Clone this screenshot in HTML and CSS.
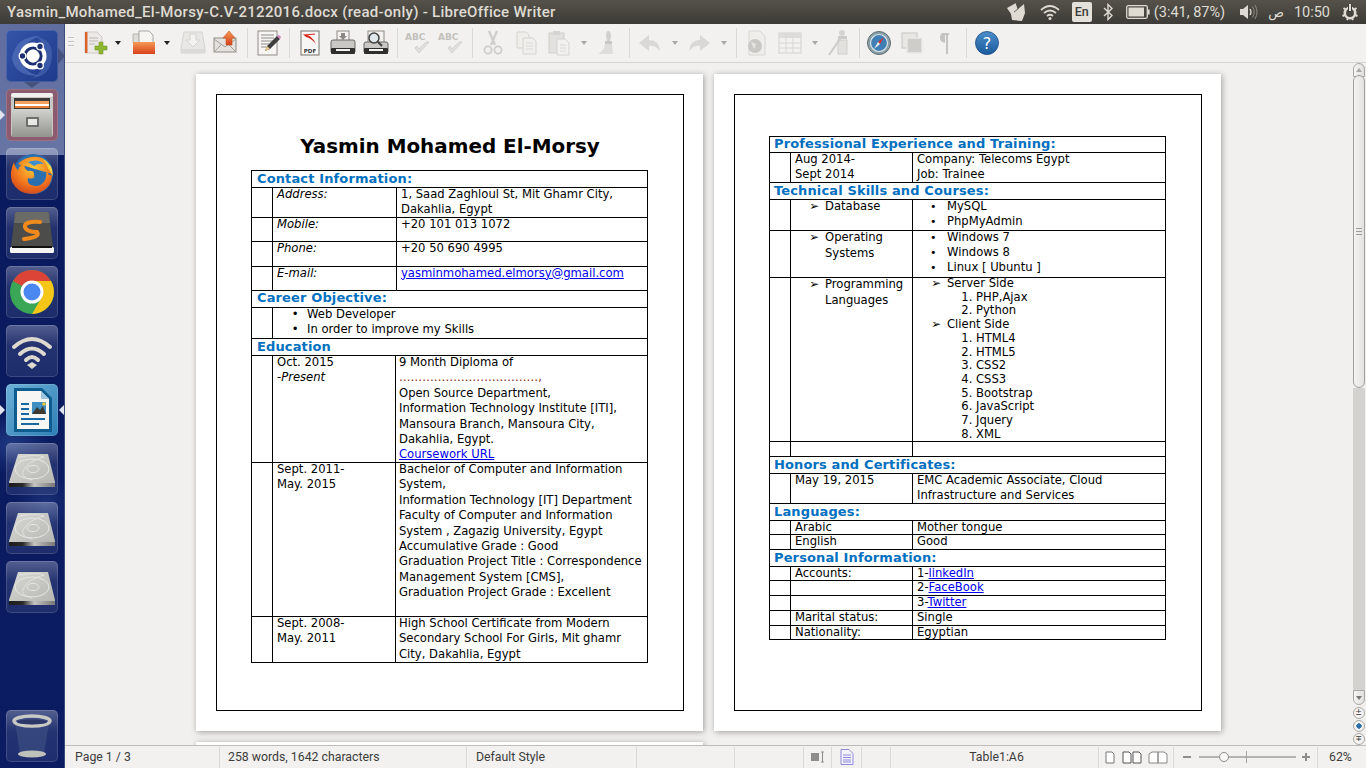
FILE: index.html
```html
<!DOCTYPE html>
<html lang="en">
<head>
<meta charset="utf-8">
<title>LibreOffice Writer</title>
<link rel="stylesheet" href="styles.css">
</head>
<body>
<svg class="defs" width="0" height="0" aria-hidden="true">
  <defs>
    <linearGradient id="gOrange" x1="0" y1="0" x2="0" y2="1"><stop offset="0" stop-color="#f59a55"/><stop offset="1" stop-color="#d8401a"/></linearGradient>
    <linearGradient id="gMetal" x1="0" y1="0" x2="0" y2="1"><stop offset="0" stop-color="#d2d2ce"/><stop offset="1" stop-color="#94948f"/></linearGradient>
    <linearGradient id="gFace" x1="0" y1="0" x2="1" y2="1"><stop offset="0" stop-color="#d8d8d4"/><stop offset="1" stop-color="#b4b4b0"/></linearGradient>
    <linearGradient id="gStrip" x1="0" y1="0" x2="1" y2="0"><stop offset="0" stop-color="#1c1c1c"/><stop offset=".3" stop-color="#2a2a2a"/><stop offset=".55" stop-color="#c4c4c0"/><stop offset="1" stop-color="#777"/></linearGradient>
    <linearGradient id="gHelp" x1="0" y1="0" x2="0" y2="1"><stop offset="0" stop-color="#4d8ecb"/><stop offset="1" stop-color="#1b5a9c"/></linearGradient>
    <radialGradient id="gFox" cx=".55" cy=".3" r=".8"><stop offset="0" stop-color="#ffc93a"/><stop offset=".55" stop-color="#f47a1d"/><stop offset="1" stop-color="#c9391a"/></radialGradient>
    <symbol id="hdd" viewBox="0 0 48 48">
      <path d="M10 9 H40 L47 37 V40 Q47 42 45 42 H3 Q1 42 1 40 V37 Z" fill="url(#gFace)"/>
      <ellipse cx="24" cy="24" rx="17" ry="10" fill="none" stroke="#e6e6e2" stroke-width="1"/>
      <ellipse cx="25" cy="24" rx="6" ry="3.600" fill="none" stroke="#e6e6e2" stroke-width="1"/>
      <path d="M11 12 Q30 9 36 12 Q20 16 15 26 Q12 32 24 35" fill="none" stroke="#e6e6e2" stroke-width=".8"/>
      <rect x="1" y="38" width="46" height="4" fill="url(#gStrip)"/>
    </symbol>
    <symbol id="abc" viewBox="0 0 28 26">
      <text x="1" y="10" class="abc-t">ABC</text>
      <path d="M11 18 L15 23 L25 12 L22 12 L15 19 L13 16 Z" fill="#e2e1de" stroke="#c6c5c1" stroke-width=".7"/>
    </symbol>
  </defs>
</svg>

<header class="topbar">
  <div class="wintitle">Yasmin_Mohamed_El-Morsy-C.V-2122016.docx (read-only) - LibreOffice Writer</div>
  <div class="tray">
    <svg class="t-paper" width="22" height="22" viewBox="0 0 22 22"><path d="M2 7 L11 2 L13 8 L19 3 L20 12 L17 20 L7 19 L6 13 Z" fill="#dfdbd2"/><path d="M11 2 L13 8 L9 11" fill="none" stroke="#4a4742" stroke-width=".8"/></svg>
    <svg class="t-wifi" width="22" height="18" viewBox="0 0 22 18"><path d="M2 7 Q11 -1 20 7 M5 10 Q11 5 17 10 M8 13 Q11 10.500 14 13" fill="none" stroke="#dfdbd2" stroke-width="1.700"/><circle cx="11" cy="15.500" r="1.500" fill="#dfdbd2"/></svg>
    <div class="t-lang">En</div>
    <svg class="t-bt" width="10" height="18" viewBox="0 0 10 18"><path d="M1 5 L9 12.500 L5 16.500 V1.500 L9 5.500 L1 13" fill="none" stroke="#dfdbd2" stroke-width="1.400"/></svg>
    <svg class="t-bat" width="24" height="14" viewBox="0 0 24 14"><rect x=".7" y=".7" width="20.600" height="12.600" rx="1.500" fill="none" stroke="#dfdbd2" stroke-width="1.300"/><rect x="2.500" y="2.500" width="15.500" height="9" fill="#dfdbd2"/><rect x="22" y="4.500" width="1.600" height="5" fill="#dfdbd2"/></svg>
    <span class="t-text t-battxt">(3:41, 87%)</span>
    <svg class="t-vol" width="20" height="18" viewBox="0 0 20 18"><path d="M1 6 H4 L9 2 V16 L4 12 H1 Z" fill="#dfdbd2"/><path d="M11 6 Q13 9 11 12" fill="none" stroke="#dfdbd2" stroke-width="1.300"/><path d="M13.500 3.500 Q17 9 13.500 14.500 M16 2 Q20 9 16 16" fill="none" stroke="#8d8a84" stroke-width="1"/></svg>
    <span class="t-text t-ar" lang="ar">ص</span>
    <span class="t-text t-time">10:50</span>
    <svg class="t-gear" width="18" height="18" viewBox="0 0 18 18"><circle cx="9" cy="10" r="5.200" fill="none" stroke="#dfdbd2" stroke-width="2.600"/><path d="M9 1 V9" stroke="#3f3d38" stroke-width="4"/><path d="M9 1 V8" stroke="#dfdbd2" stroke-width="2"/><path d="M2.500 5 L4.500 6.500 M15.500 5 L13.500 6.500 M1.500 13 L4 12 M16.500 13 L14 12 M6 17 L7 15 M12 17 L11 15" stroke="#dfdbd2" stroke-width="2"/></svg>
  </div>
</header>

<div class="shell">
  <nav class="launcher">
    <div class="tile tile-dash">
      <svg width="48" height="48" viewBox="0 0 48 48"><path d="M4 26 Q8 4 32 4 Q14 10 14 26 Q14 40 32 44 Q6 44 4 26 Z" fill="#5f7cc2" opacity=".55"/><path d="M44 22 Q44 44 24 46 Q38 38 38 24 Q38 12 28 4 Q44 8 44 22 Z" fill="#5f7cc2" opacity=".4"/><circle cx="25" cy="24" r="13.500" fill="#fff"/><circle cx="25" cy="24" r="8" fill="none" stroke="#1c2f72" stroke-width="3.200"/><circle cx="25" cy="24" r="6" fill="none" stroke="#fff" stroke-width="1"/><circle cx="32" cy="14.500" r="3.300" fill="#1c2f72" stroke="#fff" stroke-width="1.300"/><circle cx="32" cy="33.500" r="3.300" fill="#1c2f72" stroke="#fff" stroke-width="1.300"/><circle cx="14.500" cy="24" r="3.300" fill="#1c2f72" stroke="#fff" stroke-width="1.300"/></svg>
      <span class="ptr-right"></span><span class="ptr-down"></span>
    </div>
    <div class="tile tile-files">
      <span class="pip-left"></span>
      <svg width="46" height="46" viewBox="0 0 46 46"><rect x="2" y="1" width="42" height="44" rx="3" fill="#c8c8c4"/><rect x="2" y="1" width="42" height="4" rx="2" fill="#f0f0ee"/><rect x="5" y="6" width="36" height="14" fill="#3a3a38"/><rect x="6" y="9" width="34" height="3" fill="#f3a15c"/><rect x="6" y="12" width="34" height="2" fill="#fff"/><rect x="6" y="14" width="34" height="2" fill="#e77c35"/><rect x="3" y="17" width="40" height="28" fill="url(#gMetal)"/><rect x="17" y="25" width="13" height="10" rx="1" fill="#6e6e6a"/><rect x="19" y="27" width="9" height="6" fill="#e8e8e6"/></svg>
    </div>
    <div class="tile">
      <svg width="48" height="48" viewBox="0 0 48 48"><circle cx="25" cy="24" r="20" fill="#2a6fb0"/><path d="M10 14 Q20 4 34 8 Q44 14 44 24 Q44 38 30 43 Q12 47 4 32 Q1 22 6 12 Q7 18 10 20 Q12 14 18 11 Q14 18 20 21 Q26 20 26 24 Q28 30 20 28 Q18 36 30 36 Q40 32 38 20 Q42 28 44 24 Z" fill="url(#gFox)"/><path d="M34 8 Q45 14 45 26 L40 18 Q38 12 34 8Z" fill="#ffd23c"/><path d="M20 12 Q30 8 36 14 Q30 13 26 16 Z" fill="#3f8fd0"/></svg>
    </div>
    <div class="tile">
      <svg width="48" height="48" viewBox="0 0 48 48"><path d="M7 5 Q7 3 9 3 H39 Q41 3 41 5 L45 38 H3 Z" fill="#4c4c4a"/><path d="M7 5 Q7 3 9 3 H39 Q41 3 41 5 L42 14 H6 Z" fill="#6a6a66"/><rect x="2" y="38" width="44" height="6" rx="1.500" fill="#f4f4f2"/><rect x="4" y="37" width="40" height="2" fill="#111"/><path d="M32 13 Q16 12 17 18 Q18 23 29 23 Q33 28 16 30" fill="none" stroke="#f08a1d" stroke-width="4" stroke-linecap="round"/></svg>
    </div>
    <div class="tile">
      <svg width="48" height="48" viewBox="0 0 48 48"><circle cx="24" cy="24" r="22" fill="#3aa757"/><path d="M24 2 A22 22 0 0 1 43 13 H24 A11 11 0 0 0 14 18 L5 13 A22 22 0 0 1 24 2 Z" fill="#db4437"/><path d="M43 13 A22 22 0 0 1 24 46 L34 29 A11 11 0 0 0 24 13 Z" fill="#f5c518"/><circle cx="24" cy="24" r="10" fill="#4b87f0" stroke="#fff" stroke-width="3"/></svg>
    </div>
    <div class="tile">
      <svg width="48" height="48" viewBox="0 0 48 48"><path d="M6 20 Q24 4 42 20 M12 27 Q24 16 36 27 M18 33 Q24 27 30 33" fill="none" stroke="#ddd9ce" stroke-width="4" stroke-linecap="round"/><path d="M19 38 L24 35 L29 38 L24 42 Z" fill="#ddd9ce"/></svg>
    </div>
    <div class="tile tile-libre">
      <span class="pip-left"></span><span class="pip-right"></span>
      <svg width="48" height="48" viewBox="0 0 48 48"><path d="M6 2 H34 L44 12 V46 H6 Z" fill="#0f5d8f"/><path d="M9 5 H33 L41 13 V43 H9 Z" fill="#f6f6f4"/><path d="M33 5 L41 13 H33 Z" fill="#9ec6df"/><rect x="13" y="17" width="8" height="2" fill="#1868a3"/><rect x="13" y="22" width="8" height="2" fill="#1868a3"/><rect x="13" y="27" width="8" height="2" fill="#1868a3"/><rect x="13" y="32" width="24" height="2" fill="#1868a3"/><rect x="13" y="37" width="18" height="2" fill="#1868a3"/><rect x="24" y="16" width="14" height="12" fill="#3f8fc4"/><path d="M24 28 L29 21 L32 24 L35 20 L38 28 Z" fill="#3b3b33"/><circle cx="36" cy="18" r="1.800" fill="#f2c438"/></svg>
    </div>
    <div class="tile"><svg width="48" height="48"><use href="#hdd"/></svg></div>
    <div class="tile"><svg width="48" height="48"><use href="#hdd"/></svg></div>
    <div class="tile"><svg width="48" height="48"><use href="#hdd"/></svg></div>
    <div class="tile tile-trash">
      <svg width="48" height="48" viewBox="0 0 48 48"><path d="M7 10 L12 42 Q24 47 36 42 L41 10 Z" fill="#3a4a80" opacity=".8"/><ellipse cx="24" cy="42" rx="14" ry="3.500" fill="#bfc2ba"/><ellipse cx="24" cy="9" rx="18" ry="5" fill="none" stroke="#c8c8c4" stroke-width="3.500"/><ellipse cx="24" cy="10" rx="15" ry="2.500" fill="#2c3768"/></svg>
    </div>
  </nav>

  <div class="app">
    <div class="toolbar">
      <span class="grip"></span>
      <span class="ic"><svg width="26" height="26" viewBox="0 0 26 26"><path d="M3 2 H15 L20 7 V23 H3 Z" fill="#eceae6" stroke="#b8b4ae" stroke-width=".6"/><rect x="3" y="2" width="2.500" height="21" fill="#d9622b"/><path d="M7 8 H16 M7 11 H16 M7 14 H13" stroke="#bdbab4"/><path d="M17 12 H21 V16 H25 V20 H21 V24 H17 V20 H13 V16 H17 Z" fill="#8fb534" stroke="#6f9326" stroke-width=".6"/></svg></span>
      <span class="ar"></span>
      <span class="ic"><svg width="26" height="26" viewBox="0 0 26 26"><path d="M2 4 H10 V13 H2 Z" fill="#dedcd8" stroke="#a3a09a" stroke-width=".7"/><path d="M8 1 H18 L22 5 V13 H8 Z" fill="#f6f5f2" stroke="#98958f" stroke-width=".8"/><path d="M2 12 H24 V24 H2 Z" fill="url(#gOrange)"/></svg></span>
      <span class="ar"></span>
      <span class="ic dim"><svg width="26" height="26" viewBox="0 0 26 26"><path d="M4 2 H22 L25 18 V23 H1 V18 Z" fill="#e6e5e2" stroke="#cfcdc9"/><path d="M10 4 H16 V10 H20 L13 17 L6 10 H10 Z" fill="#f4f3f1" stroke="#cfcdc9"/><rect x="1" y="19" width="24" height="4" fill="#d6d5d2"/></svg></span>
      <span class="ic"><svg width="26" height="26" viewBox="0 0 26 26"><rect x="1" y="8" width="22" height="14" fill="#e4e2de" stroke="#8f8c86"/><path d="M1 9 L12 17 L23 9 M1 22 L9 14 M23 22 L15 14" fill="none" stroke="#a3a09a"/><path d="M16 1 L22 8 H19 V15 H13 V8 H10 Z" fill="url(#gOrange)" stroke="#c4511d" stroke-width=".6"/></svg></span>
      <span class="sp"></span>
      <span class="ic"><svg width="26" height="26" viewBox="0 0 26 26"><rect x="3" y="1" width="19" height="24" fill="#f6f5f3" stroke="#8f8c86"/><path d="M6 5 H19 M6 8 H19 M6 11 H19 M6 14 H14 M6 17 H11" stroke="#8e8c87"/><path d="M10 21 L12 16 L22 6 L25 9 L15 19 Z" fill="#3d3d3b"/><path d="M22 6 L25 9 L26 7 L24 5Z" fill="#d67fc0"/><path d="M10 21 L12 16 L15 19Z" fill="#e8c98a"/></svg></span>
      <span class="sp"></span>
      <span class="ic"><svg width="26" height="26" viewBox="0 0 26 26"><rect x="4" y="1" width="18" height="24" fill="#f7f6f4" stroke="#77746e"/><path d="M6 4 Q14 4 19 14 Q14 8 9 7 Z" fill="#d7261c"/><path d="M8 5 L18 4" stroke="#d7261c"/><rect x="6" y="18" width="14" height="5" fill="#fff"/><text x="13" y="23" class="pdf-t">PDF</text></svg></span>
      <span class="ic"><svg width="26" height="26" viewBox="0 0 26 26"><rect x="7" y="1" width="12" height="10" fill="#f3f2f0" stroke="#8f8c86"/><path d="M11 3 H15 V6 H17 L13 10 L9 6 H11 Z" fill="#8c8a85"/><path d="M3 10 H23 Q25 10 25 12 V22 H1 V12 Q1 10 3 10 Z" fill="#c9c8c5" stroke="#6b6964"/><rect x="1" y="18" width="24" height="6" rx="1" fill="#2f2f2e"/><rect x="6" y="19" width="14" height="2" fill="#f4f4f2"/></svg></span>
      <span class="ic"><svg width="26" height="26" viewBox="0 0 26 26"><rect x="5" y="1" width="16" height="13" fill="#f3f2f0" stroke="#8f8c86"/><path d="M3 12 H23 Q25 12 25 14 V22 H1 V14 Q1 12 3 12 Z" fill="#c9c8c5" stroke="#6b6964"/><rect x="1" y="18" width="24" height="6" rx="1" fill="#2f2f2e"/><rect x="6" y="19" width="14" height="2" fill="#f4f4f2"/><circle cx="11" cy="8" r="5" fill="#dfe7ea" stroke="#3f3f3e" stroke-width="1.500"/><path d="M15 12 L19 16" stroke="#3f3f3e" stroke-width="2"/></svg></span>
      <span class="sp"></span>
      <span class="ic"><svg width="28" height="26"><use href="#abc"/></svg></span>
      <span class="ic"><svg width="28" height="26"><use href="#abc"/></svg></span>
      <span class="sp"></span>
      <span class="ic dim"><svg width="26" height="26" viewBox="0 0 26 26"><path d="M9 1 L15 15 M17 1 L11 15" stroke="#c6c5c2" stroke-width="2.200"/><circle cx="8" cy="20" r="3.600" fill="none" stroke="#c6c5c2" stroke-width="1.800"/><circle cx="18" cy="20" r="3.600" fill="none" stroke="#c6c5c2" stroke-width="1.800"/></svg></span>
      <span class="ic dim"><svg width="26" height="26" viewBox="0 0 26 26"><path d="M4 2 H13 L16 5 V18 H4 Z" fill="#f0efec" stroke="#cfcdc9"/><path d="M10 8 H20 L23 11 V24 H10 Z" fill="#f0efec" stroke="#cfcdc9"/><path d="M13 13 H20 M13 16 H20 M13 19 H20" stroke="#d5d4d1"/></svg></span>
      <span class="ic dim"><svg width="26" height="26" viewBox="0 0 26 26"><rect x="3" y="3" width="15" height="20" fill="#dfdedb" stroke="#c8c7c3"/><rect x="7" y="1" width="7" height="4" fill="#cfcecb"/><path d="M11 9 H19 L23 13 V25 H11 Z" fill="#f2f1ef" stroke="#cfcdc9"/><path d="M14 15 H20 M14 18 H20 M14 21 H20" stroke="#d5d4d1"/></svg></span>
      <span class="ar ar2"></span>
      <span class="ic dim"><svg width="26" height="26" viewBox="0 0 26 26"><path d="M13 1 Q16 1 16 6 L15 11 H12 L11 6 Q11 1 13 1 Z" fill="#c9c8c5"/><rect x="10" y="11" width="7" height="3" fill="#bdbcb9"/><path d="M10 14 H17 L18 24 H3 Q9 21 10 14 Z" fill="#dad9d6"/></svg></span>
      <span class="sp"></span>
      <span class="ic dim"><svg width="26" height="26" viewBox="0 0 26 26"><path d="M12 5 V10 Q22 10 23 21 Q18 15 12 16 V21 L2 13 Z" fill="#d3d2cf"/></svg></span>
      <span class="ar ar2"></span>
      <span class="ic dim"><svg width="26" height="26" viewBox="0 0 26 26"><path d="M14 5 V10 Q4 10 3 21 Q8 15 14 16 V21 L24 13 Z" fill="#d3d2cf"/></svg></span>
      <span class="ar ar2"></span>
      <span class="sp"></span>
      <span class="ic dim"><svg width="26" height="26" viewBox="0 0 26 26"><path d="M5 1 H16 L21 6 V25 H5 Z" fill="#efeeeb" stroke="#d2d0cc"/><circle cx="11" cy="16" r="7" fill="#bfbebb"/><path d="M7 12 L12 14 L10 19 Z" fill="#e4e3e0"/></svg></span>
      <span class="ic dim"><svg width="26" height="26" viewBox="0 0 26 26"><rect x="2" y="3" width="22" height="20" fill="#f2f1ef" stroke="#cdccc8"/><rect x="2" y="3" width="22" height="5" fill="#d9d8d5"/><path d="M2 13 H24 M2 18 H24 M9 3 V23 M16 3 V23" stroke="#d3d2cf"/></svg></span>
      <span class="ar ar2"></span>
      <span class="ic dim"><svg width="26" height="26" viewBox="0 0 26 26"><circle cx="16" cy="3" r="3" fill="#cfcecb"/><rect x="12" y="6" width="9" height="3" fill="#c3c2bf"/><rect x="12" y="10" width="9" height="14" fill="#dfdeda" stroke="#c9c8c4"/><path d="M3 25 L14 9" stroke="#c3c2bf" stroke-width="2"/></svg></span>
      <span class="sp sp-t"></span>
      <span class="ic"><svg width="26" height="26" viewBox="0 0 26 26"><circle cx="13" cy="13" r="11.500" fill="#8aa0a8" stroke="#5f6d72"/><circle cx="13" cy="13" r="8.500" fill="#3f7fb6" stroke="#dfe5e7" stroke-width="1.200"/><path d="M18 7 L14 14 L12 12 Z" fill="#d9302a"/><path d="M8 19 L12 12 L14 14 Z" fill="#eee"/></svg></span>
      <span class="ic dim"><svg width="26" height="26" viewBox="0 0 26 26"><rect x="3" y="3" width="15" height="15" fill="#e6e5e2" stroke="#bdbcb8"/><rect x="8" y="8" width="15" height="15" fill="#c6c5c2" stroke="#e9e8e5" stroke-width="1.500"/></svg></span>
      <span class="ic dim"><svg width="26" height="26" viewBox="0 0 26 26"><path d="M10 3 H17 V5 H16 V24 H14 V5 H13 V13 Q8 12 8 8 Q8 4 10 3Z" fill="#b9b8b5"/></svg></span>
      <span class="sp"></span>
      <span class="ic"><svg width="26" height="26" viewBox="0 0 26 26"><circle cx="13" cy="13" r="11.500" fill="url(#gHelp)" stroke="#1a4d85" stroke-width=".8"/><text x="13" y="19" class="help-t">?</text></svg></span>
    </div>

    <div class="workspace">
      <div class="pages">
        <section class="page">
          <div class="frame">
            <h1 class="name">Yasmin Mohamed El-Morsy</h1>
            <table class="cv cv-a">
              <colgroup><col class="c1"><col class="c2a"><col></colgroup>
              <tr class="r17"><td colspan="3" class="head">Contact Information:</td></tr>
              <tr class="r30"><td></td><td class="lab"><div class="c"><em>Address:</em></div></td><td class="val"><div class="c">1, Saad Zaghloul St, Mit Ghamr City,<br>Dakahlia, Egypt</div></td></tr>
              <tr class="r24"><td></td><td class="lab"><div class="c"><em>Mobile:</em></div></td><td class="val"><div class="c">+20 101 013 1072</div></td></tr>
              <tr class="r25"><td></td><td class="lab"><div class="c"><em>Phone:</em></div></td><td class="val"><div class="c">+20 50 690 4995</div></td></tr>
              <tr class="r24"><td></td><td class="lab"><div class="c"><em>E-mail:</em></div></td><td class="val"><div class="c"><a href="#">yasminmohamed.elmorsy@gmail.com</a></div></td></tr>
              <tr class="r17"><td colspan="3" class="head head-up">Career Objective:</td></tr>
              <tr class="r31"><td></td><td colspan="2" class="objective"><ul class="bul c"><li>Web Developer</li><li>In order to improve my Skills</li></ul></td></tr>
            </table>
            <table class="cv cv-b">
              <colgroup><col class="c1"><col class="c2b"><col></colgroup>
              <tr class="r16b"><td colspan="3" class="head">Education</td></tr>
              <tr class="r107"><td></td><td class="lab"><div class="c">Oct. 2015<br>-<em>Present</em></div></td><td class="val2"><div class="c">9 Month Diploma of<br><span class="dots">………………………………,</span><br>Open Source Department,<br>Information Technology Institute [ITI],<br>Mansoura Branch, Mansoura City,<br>Dakahlia, Egypt.<br><a href="#">Coursework URL</a></div></td></tr>
              <tr class="r154"><td></td><td class="lab"><div class="c">Sept. 2011-<br>May. 2015</div></td><td class="val2"><div class="c">Bachelor of Computer and Information<br>System,<br>Information Technology [IT] Department<br>Faculty of Computer and Information<br>System , Zagazig University, Egypt<br>Accumulative Grade : Good<br>Graduation Project Title : Correspondence<br>Management System [CMS],<br>Graduation Project Grade : Excellent</div></td></tr>
              <tr class="r46"><td></td><td class="lab"><div class="c">Sept. 2008-<br>May. 2011</div></td><td class="val2"><div class="c">High School Certificate from Modern<br>Secondary School For Girls, Mit ghamr<br>City, Dakahlia, Egypt</div></td></tr>
            </table>
          </div>
        </section>
        <section class="page">
          <div class="frame frame-2">
            <table class="cv cv-c">
              <colgroup><col class="c1"><col class="c2c"><col></colgroup>
              <tr class="r16"><td colspan="3" class="head head2">Professional Experience and Training:</td></tr>
              <tr class="r30"><td></td><td class="lab2"><div class="c">Aug 2014-<br>Sept 2014</div></td><td class="val3"><div class="c">Company: Telecoms Egypt<br>Job: Trainee</div></td></tr>
              <tr class="r17"><td colspan="3" class="head head2">Technical Skills and Courses:</td></tr>
              <tr class="r31"><td></td><td class="lab3"><ul class="arr c"><li>Database</li></ul></td><td class="val4"><ul class="bul2 c"><li>MySQL</li><li>PhpMyAdmin</li></ul></td></tr>
              <tr class="r47"><td></td><td class="lab3"><ul class="arr c"><li>Operating<br>Systems</li></ul></td><td class="val4"><ul class="bul2 c"><li>Windows 7</li><li>Windows 8</li><li>Linux [ Ubuntu ]</li></ul></td></tr>
              <tr class="r164"><td></td><td class="lab3"><ul class="arr c"><li>Programming<br>Languages</li></ul></td><td class="val4">
                <ul class="arr2 c"><li>Server Side<ol><li>PHP,Ajax</li><li>Python</li></ol></li><li>Client Side<ol><li>HTML4</li><li>HTML5</li><li>CSS2</li><li>CSS3</li><li>Bootstrap</li><li>JavaScript</li><li>Jquery</li><li>XML</li></ol></li></ul>
              </td></tr>
              <tr class="r15"><td></td><td></td><td></td></tr>
              <tr class="r17"><td colspan="3" class="head head2">Honors and Certificates:</td></tr>
              <tr class="r30"><td></td><td class="lab2"><div class="c">May 19, 2015</div></td><td class="val3"><div class="c">EMC Academic Associate, Cloud<br>Infrastructure and Services</div></td></tr>
              <tr class="r17"><td colspan="3" class="head head2">Languages:</td></tr>
              <tr class="r14"><td></td><td class="lab2"><div class="c">Arabic</div></td><td class="val3"><div class="c">Mother tongue</div></td></tr>
              <tr class="r15"><td></td><td class="lab2"><div class="c">English</div></td><td class="val3"><div class="c">Good</div></td></tr>
              <tr class="r17"><td colspan="3" class="head head2">Personal Information:</td></tr>
              <tr class="r14"><td></td><td class="lab2"><div class="c">Accounts:</div></td><td class="val3"><div class="c">1-<a href="#">linkedIn</a></div></td></tr>
              <tr class="r15"><td></td><td></td><td class="val3"><div class="c">2-<a href="#">FaceBook</a></div></td></tr>
              <tr class="r15"><td></td><td></td><td class="val3"><div class="c">3-<a href="#">Twitter</a></div></td></tr>
              <tr class="r15"><td></td><td class="lab2"><div class="c">Marital status:</div></td><td class="val3"><div class="c">Single</div></td></tr>
              <tr class="r14"><td></td><td class="lab2"><div class="c">Nationality:</div></td><td class="val3"><div class="c">Egyptian</div></td></tr>
            </table>
          </div>
        </section>
        <section class="page"><div class="frame"></div></section>
      </div>
      <aside class="scrollbar">
        <span class="sb-btn sb-up"></span>
        <span class="sb-thumb"><span class="sb-grip"></span></span>
        <span class="sb-track"></span>
        <span class="sb-btn sb-down"></span>
        <span class="sb-dot">±</span>
        <span class="sb-dot sb-blue"></span>
        <span class="sb-dot">∓</span>
      </aside>
    </div>

    <footer class="statusbar">
      <div class="st st-page">Page 1 / 3</div>
      <div class="st st-words">258 words, 1642 characters</div>
      <div class="st st-style">Default Style</div>
      <div class="st st-lang"></div>
      <div class="st st-ins"></div>
      <div class="st st-sel"><svg width="16" height="12" viewBox="0 0 16 12"><rect x="1" y="2" width="8" height="8" fill="#8f8d89"/><path d="M11 1 H14 M12.500 1 V11 M11 11 H14" stroke="#8f8d89"/></svg></div>
      <div class="st st-doc"><svg width="14" height="16" viewBox="0 0 14 16"><path d="M1 .5 H9 L13 4.500 V15.500 H1 Z" fill="#f4f3fb" stroke="#8f8adf"/><path d="M3 6 H11 M3 8.500 H11 M3 11 H11 M3 13 H11" stroke="#8f8adf"/></svg></div>
      <div class="st st-empty"></div>
      <div class="st st-cell">Table1:A6</div>
      <div class="st st-view">
        <svg width="12" height="13" viewBox="0 0 12 13"><path d="M2 1 H8 L10 3 V12 H2 Z" fill="#fff" stroke="#777"/></svg>
        <svg width="20" height="13" viewBox="0 0 20 13"><path d="M1 1 H7 L9 3 V12 H1 Z M11 1 H17 L19 3 V12 H11 Z" fill="#fff" stroke="#555"/></svg>
        <svg width="20" height="13" viewBox="0 0 20 13"><path d="M1 3 L4 1 H10 V12 H1 Z M10 1 H16 L19 3 V12 H10 Z" fill="#fff" stroke="#888"/></svg>
      </div>
      <div class="st st-zoom">
        <span class="z-minus"></span>
        <span class="z-track"><span class="z-tick"></span><span class="z-knob"></span></span>
        <span class="z-plus"></span>
      </div>
      <div class="st st-pct">62%</div>
    </footer>
  </div>
</div>
</body>
</html>
```
FILE: styles.css
```css
* { box-sizing: border-box; }
html, body { margin: 0; padding: 0; height: 100%; overflow: hidden; }
body { width: 1366px; height: 768px; display: flex; flex-direction: column; font-family: "DejaVu Sans", sans-serif; background: #f2f1ef; }
.defs { position: absolute; }

/* top panel */
.topbar { height: 24px; flex: none; display: flex; align-items: center; justify-content: space-between; background: linear-gradient(#56524a, #3c3b37); color: #dfdbd2; font-family: Roboto, sans-serif; }
.wintitle { margin-left: 7px; font-size: 15px; letter-spacing: .29px; font-weight: 500; white-space: nowrap; color: #dfdbd2; }
.tray { display: flex; align-items: center; height: 24px; padding-right: 7px; }
.t-text { font-size: 14.500px; color: #dfdbd2; white-space: nowrap; }
.t-paper { margin-right: 12px; }
.t-wifi { margin-right: 11px; }
.t-lang { width: 20px; height: 20px; background: #e4e1da; color: #3c3b37; font-size: 12.500px; font-weight: 500; border-radius: 2px; text-align: center; line-height: 20px; margin-right: 11px; }
.t-bt { margin-right: 13px; }
.t-bat { margin-right: 4px; }
.t-vol { margin-left: 14px; margin-right: 9px; }
.t-ar { font-family: "DejaVu Sans", sans-serif; font-size: 13px; margin-right: 10px; }
.t-gear { margin-left: 11px; }

/* layout */
.shell { flex: 1; display: flex; min-height: 0; }
.launcher { width: 65px; flex: none; display: flex; flex-direction: column; gap: 7px; padding: 6px 0 6px 6px; background:
  radial-gradient(40px 30px at 10px 420px, rgba(70, 110, 190, .35), transparent),
  radial-gradient(30px 30px at 45px 480px, rgba(70, 110, 190, .25), transparent),
  linear-gradient(#5f6e9f 0, #6675a4 131px, #0a1a5e 131px, #0b1c62 100%); border-right: 1px solid #3e4a78; }
.tile { position: relative; width: 52px; height: 52px; flex: none; border-radius: 5px; display: flex; align-items: center; justify-content: center; background: linear-gradient(rgba(255, 255, 255, .3), rgba(255, 255, 255, .1) 40%, rgba(255, 255, 255, .08)); box-shadow: inset 0 0 0 1px rgba(255, 255, 255, .14); }
.tile-dash { background: linear-gradient(135deg, #3554a8, #1e3a8c); }
.tile-files { background: #8b5c70; }
.tile-libre { background: linear-gradient(135deg, #6cb0d8, #2f7fb5); }
.tile-trash { margin-top: auto; }
.ptr-right { position: absolute; left: 52px; top: 18px; border-left: 7px solid #47527c; border-top: 8px solid transparent; border-bottom: 8px solid transparent; }
.ptr-down { position: absolute; left: 18px; top: 52px; border-top: 6px solid #47527c; border-left: 8px solid transparent; border-right: 8px solid transparent; }
.pip-left { position: absolute; left: -6px; top: 21px; border-left: 5px solid #dfe4ee; border-top: 5px solid transparent; border-bottom: 5px solid transparent; }
.pip-right { position: absolute; left: 53px; top: 21px; border-right: 5px solid #dfe4ee; border-top: 5px solid transparent; border-bottom: 5px solid transparent; }

.app { flex: 1; min-width: 0; display: flex; flex-direction: column; }

/* toolbar */
.toolbar { height: 39px; flex: none; display: flex; align-items: center; padding-left: 3px; padding-bottom: 1px; background: #f2f1ef; border-bottom: 1px solid #d6d4d0; }
.grip { width: 6px; height: 12px; margin-right: 4.500px; background: repeating-linear-gradient(#c4c2be 0 1px, #f7f6f4 1px 2px, transparent 2px 4px); }
.ic { width: 33px; height: 28px; flex: none; display: flex; align-items: center; justify-content: center; }
.dim { opacity: .8; }
.ar { width: 13px; margin-right: 3px; flex: none; display: flex; justify-content: center; }
.ar::before { content: ""; border-top: 4px solid #222; border-left: 3.500px solid transparent; border-right: 3.500px solid transparent; }
.ar2 { width: 16px; margin-right: 0; }
.ar2::before { border-top-color: #a9a8a5; }
.sp { width: 1px; height: 30px; margin: 0 4px; flex: none; background: #dad8d4; }
.sp-t { margin: 0 3px; }
.abc-t { font: bold 9px "DejaVu Sans", sans-serif; fill: #c2c1bd; }
.pdf-t { font: bold 5.500px "DejaVu Sans", sans-serif; fill: #333; text-anchor: middle; }
.help-t { font: 16px "DejaVu Sans", sans-serif; fill: #fff; text-anchor: middle; }

/* workspace */
.workspace { flex: 1; min-height: 0; display: flex; }
.pages { flex: 1; min-width: 0; overflow: hidden; padding: 11px 0 0 131px; display: flex; flex-wrap: wrap; align-content: flex-start; gap: 11px; background: #f1f0ee; }
.page { width: 507px; height: 657px; padding: 20px 19px 20px 20px; background: #fff; box-shadow: 1px 1px 6px rgba(0, 0, 0, .35); }
.frame { height: 100%; border: 1px solid #000; padding-left: 34px; }
.frame-2 { padding-top: 41px; }
.name { margin: 38px 0 10px -34px; height: 27px; font-size: 19.900px; line-height: 27px; font-weight: 700; text-align: center; color: #000; white-space: nowrap; }

/* tables */
.cv { border-collapse: collapse; table-layout: fixed; width: 397px; font-size: 11.600px; line-height: 15.400px; color: #000; }
.cv td { border: 1px solid #000; padding: 0; vertical-align: top; white-space: nowrap; }
.cv-b tr:first-child td { border-top: 0; }
.cv-c { line-height: 15px; }
.c { height: 0; margin-top: -1.500px; }
.cv-b .c { margin-top: -.5px; }
.c1 { width: 21px; }
.c2a { width: 124px; }
.c2b { width: 123px; }
.c2c { width: 122px; }
.r14 { height: 14px; } .r15 { height: 15px; } .r16, .r16b { height: 16px; } .r17 { height: 17px; }
.r24 { height: 24px; } .r25 { height: 25px; } .r30 { height: 30px; } .r31 { height: 31px; }
.r46 { height: 46px; } .r47 { height: 47px; } .r107 { height: 107px; } .r154 { height: 154px; } .r164 { height: 164px; }
.cv .head { font-size: 13px; letter-spacing: .13px; font-weight: 700; color: #0070c0; padding-left: 5px; line-height: 16px; }
.cv .r16 .head { line-height: 14px; }
.cv .r16b .head { line-height: 15px; }
.cv .head-up { line-height: 14.500px; }
.cv .head2 { padding-left: 4px; }
.cv .lab { padding-left: 4px; }
.cv .val { padding-left: 4px; }
.cv .val2 { padding-left: 3px; }
.cv .lab2 { padding-left: 4px; }
.cv .val3 { padding-left: 4px; }
a { color: #0000ee; }
.dots { color: #8a2c10; }
ul, ol { margin: 0; padding: 0; }
.cv .objective { padding-left: 34px; }
.bul { list-style-type: "•\00a0\00a0\200a"; line-height: 15.400px; }
.cv .lab3 { padding-left: 34px; }
.arr.c { list-style-type: "➢\00a0\2009"; line-height: 16px; margin-top: -2.500px; }
.cv .val4 { padding-left: 34px; }
.bul2 { list-style-type: "•\00a0\00a0\00a0"; line-height: 15.400px; }
.bul2 li::marker { font-size: 11px; }
.bul.c { margin-top: -1px; }
.arr2.c { list-style-type: "➢\00a0\2009"; line-height: 13.700px; margin-top: -1px; }
.arr2 ol { padding-left: 29px; list-style-type: decimal; }

/* scrollbar */
.scrollbar { width: 15px; flex: none; background: #f1f0ee; display: flex; flex-direction: column; align-items: center; }
.sb-btn { width: 12px; height: 14px; flex: none; border: 1px solid #a9a7a3; background: linear-gradient(90deg, #f6f5f3, #e2e0dd); display: flex; align-items: center; justify-content: center; }
.sb-up { border-radius: 6px 6px 0 0; }
.sb-up::before { content: ""; border-bottom: 4px solid #a9a7a3; border-left: 3px solid transparent; border-right: 3px solid transparent; }
.sb-thumb { width: 12px; height: 313px; flex: none; margin-top: -2px; border: 1px solid #a09e9a; border-radius: 6px; background: linear-gradient(90deg, #f4f3f1, #e4e2df); display: flex; align-items: center; justify-content: center; }
.sb-grip { width: 6px; height: 8px; background: repeating-linear-gradient(#9d9b97 0 1px, transparent 1px 3px); }
.sb-track { flex: 1; width: 12px; background: #d4d2cf; }
.sb-down { border-radius: 0 0 6px 6px; height: 15px; }
.sb-down::before { content: ""; border-top: 4px solid #777; border-left: 3px solid transparent; border-right: 3px solid transparent; }
.sb-dot { width: 12px; height: 12px; flex: none; margin-top: 1px; border: 1px solid #a9a7a3; border-radius: 50%; background: #f4f3f1; font-size: 8px; line-height: 10px; text-align: center; color: #333; }
.sb-down + .sb-dot { margin-top: 2px; }
.sb-blue { background: radial-gradient(#2f6fa8 35%, #f4f3f1 40%); }

/* status bar */
.statusbar { height: 23px; flex: none; display: flex; align-items: center; background: #f2f1ef; border-top: 1px solid #bfbdb9; font-family: Roboto, sans-serif; font-size: 12.300px; color: #3c3c3c; white-space: nowrap; }
.st { height: 21px; flex: none; display: flex; align-items: center; border-right: 1px solid #dcdad6; }
.st-page { width: 155px; padding-left: 10px; }
.st-words { width: 247px; padding-left: 8px; }
.st-style { width: 170px; padding-left: 9px; }
.st-lang { width: 98px; }
.st-ins { width: 69px; }
.st-sel { width: 28px; justify-content: center; }
.st-doc { width: 30px; justify-content: center; }
.st-empty { width: 29px; }
.st-cell { width: 208px; justify-content: center; padding-left: 4px; }
.st-view { width: 75px; gap: 6px; justify-content: center; }
.st-zoom { width: 144px; padding-left: 9px; }
.z-minus { width: 8px; height: 2px; background: #8f8d89; }
.z-track { position: relative; width: 97px; height: 2px; margin: 0 6px 0 8px; background: #b5b3af; }
.z-tick { position: absolute; left: 47px; top: -5px; width: 1px; height: 12px; background: #a5a3a0; }
.z-knob { position: absolute; left: 20px; top: -4px; width: 10px; height: 10px; border-radius: 50%; border: 1px solid #8f8d89; background: #f7f6f4; }
.z-plus { width: 8px; height: 8px; background: linear-gradient(#8f8d89, #8f8d89) center / 8px 2px no-repeat, linear-gradient(#8f8d89, #8f8d89) center / 2px 8px no-repeat; }
.st-pct { border-right: 0; padding-left: 11px; }
```
